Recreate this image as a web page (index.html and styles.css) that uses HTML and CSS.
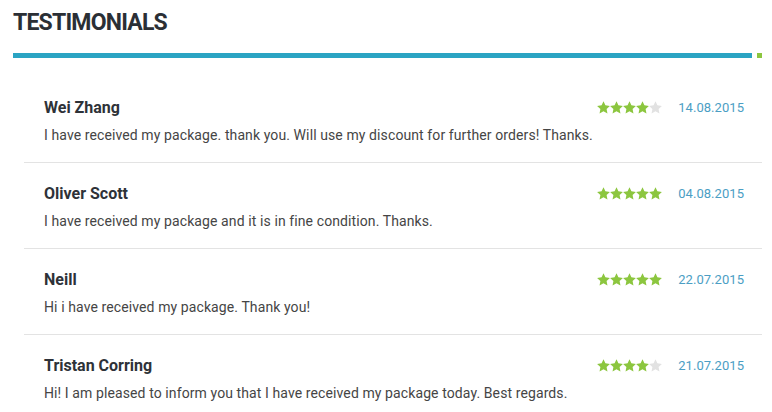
FILE: index.html
```html
<!DOCTYPE html>
<html>
<head>
<meta charset="utf-8">
<link rel="stylesheet" href="styles.css">
</head>
<body>
<svg width="0" height="0" class="defs" aria-hidden="true">
  <defs>
    <symbol id="star" viewBox="0 0 26 26">
      <path d="M13 0.5 L16.8 8.7 L25.8 9.8 L19.2 16 L20.9 24.9 L13 20.5 L5.1 24.9 L6.8 16 L0.2 9.8 L9.2 8.7 Z"/>
    </symbol>
  </defs>
</svg>
<section class="testimonials">
  <h2 class="title">TESTIMONIALS</h2>
  <div class="rule"><span class="rule-bar"></span><span class="rule-dot"></span></div>
  <ul class="list">
    <li class="item">
      <div class="item-head">
        <span class="name">Wei Zhang</span>
        <span class="meta">
          <span class="stars">
            <svg class="star on"><use href="#star"/></svg><svg class="star on"><use href="#star"/></svg><svg class="star on"><use href="#star"/></svg><svg class="star on"><use href="#star"/></svg><svg class="star off"><use href="#star"/></svg>
          </span>
          <span class="date">14.08.2015</span>
        </span>
      </div>
      <p class="text">I have received my package. thank you. Will use my discount for further orders! Thanks.</p>
    </li>
    <li class="item">
      <div class="item-head">
        <span class="name">Oliver Scott</span>
        <span class="meta">
          <span class="stars">
            <svg class="star on"><use href="#star"/></svg><svg class="star on"><use href="#star"/></svg><svg class="star on"><use href="#star"/></svg><svg class="star on"><use href="#star"/></svg><svg class="star on"><use href="#star"/></svg>
          </span>
          <span class="date">04.08.2015</span>
        </span>
      </div>
      <p class="text">I have received my package and it is in fine condition. Thanks.</p>
    </li>
    <li class="item">
      <div class="item-head">
        <span class="name">Neill</span>
        <span class="meta">
          <span class="stars">
            <svg class="star on"><use href="#star"/></svg><svg class="star on"><use href="#star"/></svg><svg class="star on"><use href="#star"/></svg><svg class="star on"><use href="#star"/></svg><svg class="star on"><use href="#star"/></svg>
          </span>
          <span class="date">22.07.2015</span>
        </span>
      </div>
      <p class="text">Hi i have received my package. Thank you!</p>
    </li>
    <li class="item">
      <div class="item-head">
        <span class="name">Tristan Corring</span>
        <span class="meta">
          <span class="stars">
            <svg class="star on"><use href="#star"/></svg><svg class="star on"><use href="#star"/></svg><svg class="star on"><use href="#star"/></svg><svg class="star on"><use href="#star"/></svg><svg class="star off"><use href="#star"/></svg>
          </span>
          <span class="date">21.07.2015</span>
        </span>
      </div>
      <p class="text">Hi! I am pleased to inform you that I have received my package today. Best regards.</p>
    </li>
  </ul>
</section>
</body>
</html>
```
FILE: styles.css
```css
* { box-sizing: border-box; }
html, body { margin: 0; padding: 0; background: #fff; }
body { font-family: Roboto, "Liberation Sans", sans-serif; }
.defs { position: absolute; width: 0; height: 0; overflow: hidden; }
.testimonials { padding: 8px 10px 0 13px; }
.title {
  margin: 0;
  font-size: 23px;
  line-height: 30px;
  font-weight: 700;
  color: #2b2f35;
  letter-spacing: -0.8px;
}
.rule { display: flex; align-items: center; gap: 5px; margin-top: 15px; height: 5px; }
.rule-bar { flex: 1; height: 5px; background: #2ba4c3; }
.rule-dot { width: 5px; height: 5px; background: #8cc63f; }
.list { list-style: none; margin: 19px 0 0 11px; padding: 0; }
.item {
  padding: 20px 18px 0 20px;
  height: 86px;
  border-bottom: 1px solid #e3e3e3;
}
.item-head { display: flex; justify-content: space-between; align-items: center; height: 20px; }
.name { font-size: 16px; font-weight: 700; color: #2e3238; }
.meta { display: flex; align-items: center; gap: 16px; }
.stars { display: flex; height: 13px; }
.star { width: 13px; height: 13px; display: block; }
.star.on { fill: #8cc63f; }
.star.off { fill: #e2e2e2; }
.date { font-size: 13px; color: #4b9ec4; letter-spacing: 0.05px; }
.text { margin: 9px 0 0; font-size: 14px; line-height: 18px; color: #454545; letter-spacing: 0.1px; }
```
